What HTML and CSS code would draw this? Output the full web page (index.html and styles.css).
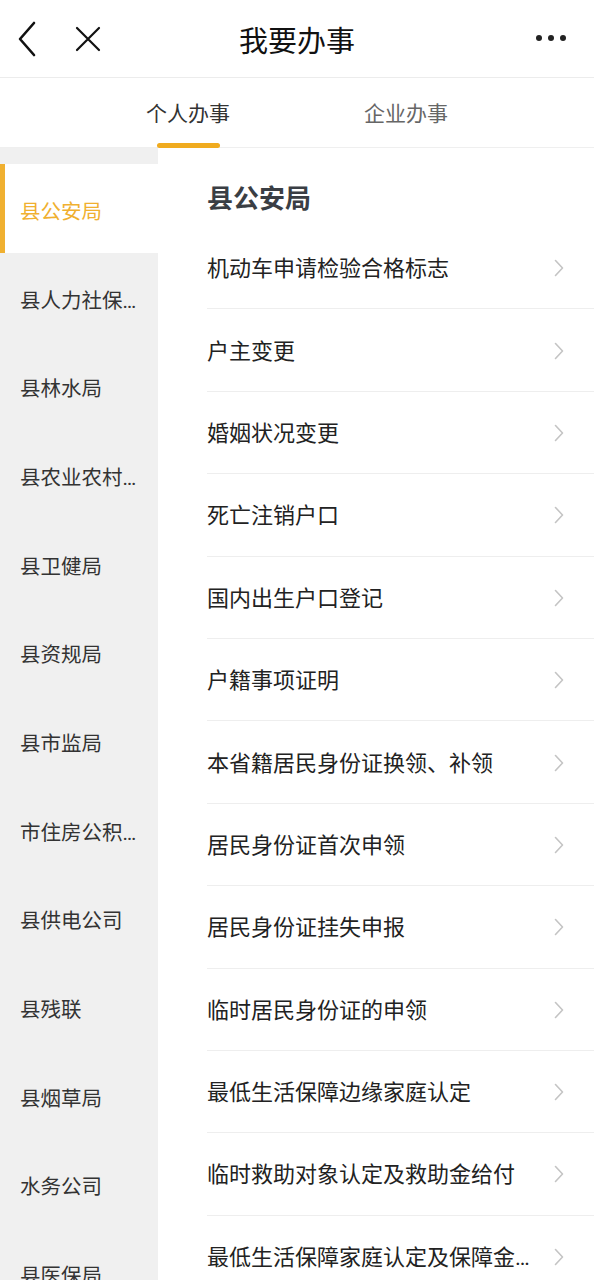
FILE: index.html
```html
<!DOCTYPE html>
<html lang="zh-CN">
<head>
<meta charset="utf-8">
<title>我要办事</title>
<link rel="stylesheet" href="styles.css">
</head>
<body>
<div class="page">
  <header class="topbar">
    <div class="top-left">
      <svg class="ic-back" width="20" height="36" viewBox="0 0 20 36"><path d="M17 2 L3 18 L17 34" fill="none" stroke="#111" stroke-width="2.6" stroke-linecap="round" stroke-linejoin="round"/></svg>
      <svg class="ic-close" width="26" height="26" viewBox="0 0 26 26"><path d="M2 2 L24 24 M24 2 L2 24" fill="none" stroke="#111" stroke-width="2.2" stroke-linecap="round"/></svg>
    </div>
    <div class="title">我要办事</div>
    <div class="top-right">
      <svg class="ic-more" width="32" height="8" viewBox="0 0 32 8"><circle cx="4" cy="4" r="3" fill="#222"/><circle cx="16" cy="4" r="3" fill="#222"/><circle cx="28" cy="4" r="3" fill="#222"/></svg>
    </div>
  </header>
  <nav class="tabs">
    <div class="tab active">个人办事<span class="tab-line"></span></div>
    <div class="tab">企业办事</div>
  </nav>
  <main class="body">
    <aside class="side">
      <div class="side-item active">县公安局</div>
      <div class="side-item">县人力社保局</div>
      <div class="side-item">县林水局</div>
      <div class="side-item">县农业农村局</div>
      <div class="side-item">县卫健局</div>
      <div class="side-item">县资规局</div>
      <div class="side-item">县市监局</div>
      <div class="side-item">市住房公积金中心</div>
      <div class="side-item">县供电公司</div>
      <div class="side-item">县残联</div>
      <div class="side-item">县烟草局</div>
      <div class="side-item">水务公司</div>
      <div class="side-item">县医保局</div>
    </aside>
    <section class="content">
      <h2 class="dept">县公安局</h2>
      <ul class="list">
        <li class="row"><span class="row-text">机动车申请检验合格标志</span><svg class="chev" width="10" height="18" viewBox="0 0 10 18"><path d="M1.5 1.5 L8.5 9 L1.5 16.5" fill="none" stroke="#c4c4c4" stroke-width="1.6" stroke-linecap="round" stroke-linejoin="round"/></svg></li>
        <li class="row"><span class="row-text">户主变更</span><svg class="chev" width="10" height="18" viewBox="0 0 10 18"><path d="M1.5 1.5 L8.5 9 L1.5 16.5" fill="none" stroke="#c4c4c4" stroke-width="1.6" stroke-linecap="round" stroke-linejoin="round"/></svg></li>
        <li class="row"><span class="row-text">婚姻状况变更</span><svg class="chev" width="10" height="18" viewBox="0 0 10 18"><path d="M1.5 1.5 L8.5 9 L1.5 16.5" fill="none" stroke="#c4c4c4" stroke-width="1.6" stroke-linecap="round" stroke-linejoin="round"/></svg></li>
        <li class="row"><span class="row-text">死亡注销户口</span><svg class="chev" width="10" height="18" viewBox="0 0 10 18"><path d="M1.5 1.5 L8.5 9 L1.5 16.5" fill="none" stroke="#c4c4c4" stroke-width="1.6" stroke-linecap="round" stroke-linejoin="round"/></svg></li>
        <li class="row"><span class="row-text">国内出生户口登记</span><svg class="chev" width="10" height="18" viewBox="0 0 10 18"><path d="M1.5 1.5 L8.5 9 L1.5 16.5" fill="none" stroke="#c4c4c4" stroke-width="1.6" stroke-linecap="round" stroke-linejoin="round"/></svg></li>
        <li class="row"><span class="row-text">户籍事项证明</span><svg class="chev" width="10" height="18" viewBox="0 0 10 18"><path d="M1.5 1.5 L8.5 9 L1.5 16.5" fill="none" stroke="#c4c4c4" stroke-width="1.6" stroke-linecap="round" stroke-linejoin="round"/></svg></li>
        <li class="row"><span class="row-text">本省籍居民身份证换领、补领</span><svg class="chev" width="10" height="18" viewBox="0 0 10 18"><path d="M1.5 1.5 L8.5 9 L1.5 16.5" fill="none" stroke="#c4c4c4" stroke-width="1.6" stroke-linecap="round" stroke-linejoin="round"/></svg></li>
        <li class="row"><span class="row-text">居民身份证首次申领</span><svg class="chev" width="10" height="18" viewBox="0 0 10 18"><path d="M1.5 1.5 L8.5 9 L1.5 16.5" fill="none" stroke="#c4c4c4" stroke-width="1.6" stroke-linecap="round" stroke-linejoin="round"/></svg></li>
        <li class="row"><span class="row-text">居民身份证挂失申报</span><svg class="chev" width="10" height="18" viewBox="0 0 10 18"><path d="M1.5 1.5 L8.5 9 L1.5 16.5" fill="none" stroke="#c4c4c4" stroke-width="1.6" stroke-linecap="round" stroke-linejoin="round"/></svg></li>
        <li class="row"><span class="row-text">临时居民身份证的申领</span><svg class="chev" width="10" height="18" viewBox="0 0 10 18"><path d="M1.5 1.5 L8.5 9 L1.5 16.5" fill="none" stroke="#c4c4c4" stroke-width="1.6" stroke-linecap="round" stroke-linejoin="round"/></svg></li>
        <li class="row"><span class="row-text">最低生活保障边缘家庭认定</span><svg class="chev" width="10" height="18" viewBox="0 0 10 18"><path d="M1.5 1.5 L8.5 9 L1.5 16.5" fill="none" stroke="#c4c4c4" stroke-width="1.6" stroke-linecap="round" stroke-linejoin="round"/></svg></li>
        <li class="row"><span class="row-text">临时救助对象认定及救助金给付</span><svg class="chev" width="10" height="18" viewBox="0 0 10 18"><path d="M1.5 1.5 L8.5 9 L1.5 16.5" fill="none" stroke="#c4c4c4" stroke-width="1.6" stroke-linecap="round" stroke-linejoin="round"/></svg></li>
        <li class="row"><span class="row-text">最低生活保障家庭认定及保障金给付</span><svg class="chev" width="10" height="18" viewBox="0 0 10 18"><path d="M1.5 1.5 L8.5 9 L1.5 16.5" fill="none" stroke="#c4c4c4" stroke-width="1.6" stroke-linecap="round" stroke-linejoin="round"/></svg></li>
      </ul>
    </section>
  </main>
</div>
</body>
</html>
```

FILE: styles.css
```css
* { box-sizing: border-box; }
html, body { margin: 0; padding: 0; background: #fff; }
body {
  font-family: "Noto Sans CJK SC", "Noto Sans", sans-serif;
  color: #222;
}
.page {
  width: 594px;
  height: 1280px;
  overflow: hidden;
  display: flex;
  flex-direction: column;
}
.topbar {
  height: 78px;
  flex: none;
  border-bottom: 1px solid #ececec;
  display: grid;
  grid-template-columns: 1fr auto 1fr;
  align-items: center;
}
.top-left {
  display: flex;
  align-items: center;
  padding-left: 17px;
  gap: 38px;
}
.ic-back { display: block; }
.ic-close { display: block; }
.title {
  font-size: 29px;
  color: #111;
  line-height: 1;
  padding-top: 1px;
}
.top-right {
  display: flex;
  justify-content: flex-end;
  padding-right: 27px;
}
.ic-more { display: block; margin-top: -1px; }
.tabs {
  height: 70px;
  flex: none;
  display: flex;
  justify-content: center;
  border-bottom: 1px solid #efefef;
}
.tab {
  width: 218px;
  position: relative;
  display: flex;
  align-items: center;
  justify-content: center;
  font-size: 21px;
  color: #666;
  padding-bottom: 2px;
}
.tab.active { color: #333; }
.tab-line {
  position: absolute;
  left: 50%;
  bottom: -1px;
  width: 63px;
  height: 5px;
  margin-left: -31px;
  border-radius: 3px;
  background: #f0ab1f;
}
.body {
  flex: 1;
  display: flex;
  min-height: 0;
}
.side {
  width: 158px;
  flex: none;
  background: #f0f0f0;
  padding-top: 16px;
}
.side-item {
  height: 88.67px;
  line-height: 80.67px;
  padding: 8px 16px 0 20px;
  font-family: "Roboto", "Noto Sans CJK SC", sans-serif;
  font-size: 20.5px;
  color: #333;
  white-space: nowrap;
  overflow: hidden;
  text-overflow: ellipsis;
}
.side-item.active {
  background: #fff;
  color: #f0b030;
  box-shadow: inset 5px 0 0 #f0b030;
}
.content {
  flex: 1;
  padding-top: 16px;
  min-width: 0;
}
.dept {
  margin: 0;
  padding: 4px 0 0 49px;
  height: 63px;
  line-height: 58px;
  font-size: 26px;
  font-weight: 700;
  color: #3a3e44;
}
.list {
  list-style: none;
  margin: 0 0 0 49px;
  padding: 0;
}
.row {
  height: 82.4px;
  border-bottom: 1px solid #eeeeee;
  display: flex;
  align-items: center;
  padding-right: 30px;
  padding-bottom: 3px;
}
.row-text {
  flex: 1;
  min-width: 0;
  font-family: "Roboto", "Noto Sans CJK SC", sans-serif;
  font-size: 22px;
  color: #222;
  white-space: nowrap;
  overflow: hidden;
  text-overflow: ellipsis;
  padding-right: 8px;
}
.chev { flex: none; display: block; margin-top: 4px; }
```
